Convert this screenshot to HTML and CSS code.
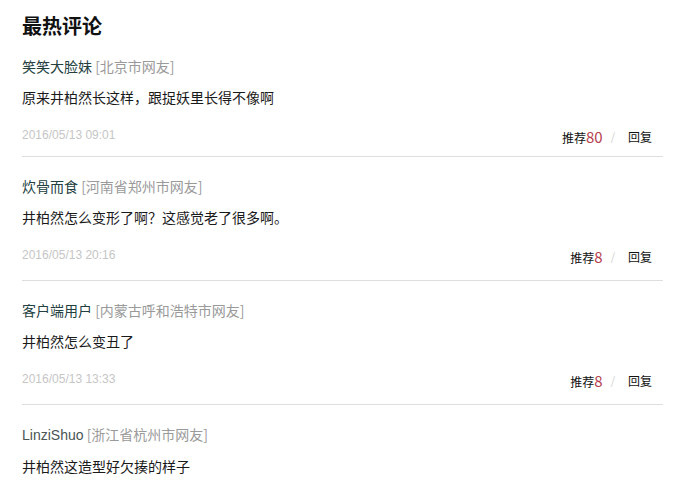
FILE: index.html
```html
<!DOCTYPE html>
<html lang="zh-CN">
<head>
<meta charset="utf-8">
<title>最热评论</title>
<link rel="stylesheet" href="styles.css">
</head>
<body>
<div class="page">
  <h2 class="title">最热评论</h2>
  <ul class="comments">
    <li class="comment">
      <div class="author"><span class="name">笑笑大脸妹</span> <span class="loc">[北京市网友]</span></div>
      <div class="text">原来井柏然长这样，跟捉妖里长得不像啊</div>
      <div class="meta">
        <span class="date">2016/05/13 09:01</span>
        <span class="actions"><span class="vote">推荐<em class="num">80</em></span><span class="sep">/</span><span class="reply">回复</span></span>
      </div>
    </li>
    <li class="comment">
      <div class="author"><span class="name">炊骨而食</span> <span class="loc">[河南省郑州市网友]</span></div>
      <div class="text">井柏然怎么变形了啊？这感觉老了很多啊。</div>
      <div class="meta">
        <span class="date">2016/05/13 20:16</span>
        <span class="actions"><span class="vote">推荐<em class="num">8</em></span><span class="sep">/</span><span class="reply">回复</span></span>
      </div>
    </li>
    <li class="comment">
      <div class="author"><span class="name">客户端用户</span> <span class="loc">[内蒙古呼和浩特市网友]</span></div>
      <div class="text">井柏然怎么变丑了</div>
      <div class="meta">
        <span class="date">2016/05/13 13:33</span>
        <span class="actions"><span class="vote">推荐<em class="num">8</em></span><span class="sep">/</span><span class="reply">回复</span></span>
      </div>
    </li>
    <li class="comment">
      <div class="author"><span class="name latin">LinziShuo</span> <span class="loc">[浙江省杭州市网友]</span></div>
      <div class="text">井柏然这造型好欠揍的样子</div>
    </li>
  </ul>
</div>
</body>
</html>
```
FILE: styles.css
```css
* { box-sizing: border-box; }
html, body { margin: 0; padding: 0; background: #fff; }
body {
  font-family: "Liberation Sans", "Noto Sans CJK SC", sans-serif;
  color: #222;
  overflow: hidden;
}
.page {
  width: 641px;
  margin-left: 22px;
  padding-top: 12px;
}
.title {
  margin: 0;
  font-family: "Noto Sans CJK SC", sans-serif;
  font-size: 20px;
  line-height: 28px;
  font-weight: 700;
  color: #111;
  letter-spacing: 0;
}
.comments {
  list-style: none;
  margin: 0;
  padding: 0;
}
.comment {
  padding: 19px 0 15px;
  border-bottom: 1px solid #dedede;
}
.comment:first-child {
  padding-top: 16px;
  padding-bottom: 11px;
}
.comment:last-child { border-bottom: 0; }
.author {
  font-size: 14px;
  line-height: 20px;
  font-family: "Noto Sans CJK SC", sans-serif;
}
.name { color: #23403f; }
.name.latin { font-family: "Liberation Sans", sans-serif; color: #4a5555; }
.loc { color: #9a9a9a; }
.text {
  margin-top: 11px;
  font-size: 14px;
  line-height: 20px;
  font-family: "Noto Sans CJK SC", sans-serif;
  color: #1a1a1a;
}
.meta {
  margin-top: 18px;
  height: 20px;
  display: flex;
  align-items: center;
  justify-content: space-between;
  padding-right: 11px;
}
.date {
  font-family: "Liberation Sans", sans-serif;
  font-size: 12px;
  color: #c6c6c6;
}
.actions {
  display: flex;
  align-items: center;
  font-family: "Noto Sans CJK SC", sans-serif;
  font-size: 12px;
  color: #111;
  margin-top: 2px;
}
.num {
  font-style: normal;
  font-family: "Noto Sans CJK SC", sans-serif;
  font-size: 15px;
  color: #b5414f;
}
.sep {
  color: #d0d0d0;
  margin: 0 13px 0 8px;
  font-size: 11px;
}
```
